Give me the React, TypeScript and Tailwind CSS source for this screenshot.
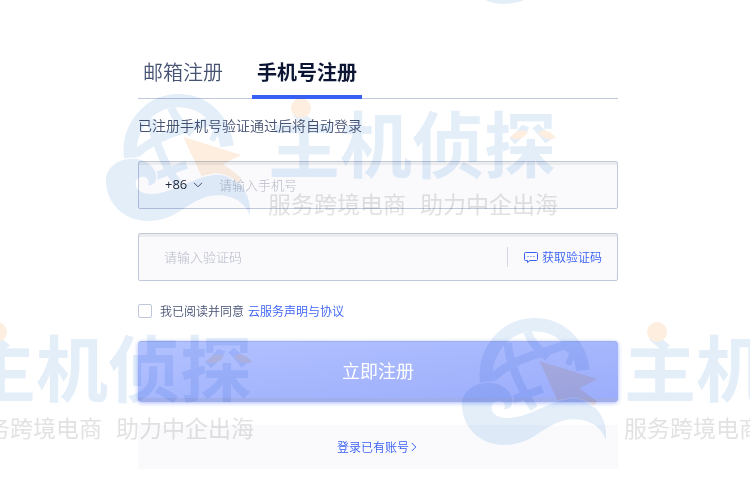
import { useState } from "react"

const tabs = [
  { id: "email", label: "邮箱注册" },
  { id: "phone", label: "手机号注册" },
]

function BrandMark() {
  return (
    <svg viewBox="33 24 435 381" width="145" height="127" className="shrink-0">
      <g fill="none" stroke="#e3eef9">
        <path d="M110 217C98 125 165 44 254 44C330 44 389 100 399 181" strokeWidth="40" />
        <path d="M126 204C165 168 215 145 268 130L344 106" strokeWidth="26" />
        <path d="M174 98C174 145 205 225 252 296" strokeWidth="25" />
        <path d="M232 66C245 98 265 120 294 142" strokeWidth="25" />
        <path d="M185 270L278 236" strokeWidth="24" />
        <path d="M336 100L368 130L354 164" strokeWidth="18" />
      </g>
      <path
        d="M36 292C32 248 68 218 116 218C162 218 190 250 187 278C184 292 174 300 162 297C170 279 154 268 138 274C120 282 121 303 137 315C157 329 188 325 222 315C270 299 315 271 360 266C425 259 477 322 467 388C453 348 416 327 366 328C324 329 290 355 255 377C224 397 190 405 155 405C88 402 40 352 36 292Z"
        fill="#e3eef9"
        stroke="#fff"
        strokeWidth="7"
        paintOrder="stroke"
      />
      <path
        d="M268 153L442 207L388 235L442 275L430 288Q400 262 365 262L322 270Z"
        fill="#fdeee0"
        stroke="#fff"
        strokeWidth="6"
        paintOrder="stroke"
      />
    </svg>
  )
}

function Watermark({ className }: { className: string }) {
  return (
    <div aria-hidden="true" className={`pointer-events-none absolute flex gap-[18px] mix-blend-multiply ${className}`}>
      <BrandMark />
      <div className="relative shrink-0 whitespace-nowrap">
        <div className="text-[72px] leading-[94px] font-bold text-[#e3eef9]">主机侦探</div>
        <svg viewBox="0 0 289 96" width="289" height="96" className="absolute top-0 left-0">
          <circle cx="33" cy="14" r="10" fill="#fdeee0" />
          <path d="M242 44Q250 33 260 38Q254 48 242 44ZM288 44Q280 33 270 38Q276 48 288 44Z" fill="#fdeee0" />
        </svg>
        <div className="flex gap-[14px] text-[23px] leading-[30px] text-[#e2e2e2]">
          <span>服务跨境电商</span>
          <span>助力中企出海</span>
        </div>
      </div>
    </div>
  )
}

function Chevron({ className }: { className: string }) {
  return (
    <svg viewBox="0 0 10 6" width="10" height="6" fill="none" stroke="currentColor" className={className}>
      <path d="M1 .8L5 4.8L9 .8" />
    </svg>
  )
}

export default function App() {
  const [active, setActive] = useState("phone")

  return (
    <main className="relative min-h-screen overflow-hidden bg-white pt-[58px] pb-2 pl-1.5 font-['Noto_Sans_CJK_SC',sans-serif] text-[#465272]">
      <form className="mx-auto w-full max-w-[480px]" onSubmit={(e) => e.preventDefault()}>
        <div role="tablist" className="flex gap-6 border-b border-[#c0c8dc]">
          {tabs.map((tab) => (
            <button
              key={tab.id}
              type="button"
              role="tab"
              aria-selected={active === tab.id}
              onClick={() => setActive(tab.id)}
              className={
                active === tab.id
                  ? "-mb-px border-b-4 border-[#3860f4] px-[5px] pb-[9px] text-xl leading-7 font-bold text-[#0c1634]"
                  : "-mb-px border-b-4 border-transparent px-[5px] pb-[9px] text-xl leading-7 font-[350]"
              }
            >
              {tab.label}
            </button>
          ))}
        </div>

        <p className="mt-4 text-sm leading-5 font-[350]">已注册手机号验证通过后将自动登录</p>

        <div className="mt-[26px] flex h-12 items-center rounded-xs border border-[#c0c8dc] bg-[#fafafd] pl-[26px] shadow-[inset_0_3px_0_#ececee]">
          <div className="relative flex items-center">
            <select
              aria-label="国家/地区代码"
              className="w-10 appearance-none bg-transparent font-['Open_Sans',sans-serif] text-[13px] text-[#1c2438] outline-none"
            >
              <option>+86</option>
            </select>
            <Chevron className="pointer-events-none absolute right-0.5" />
          </div>
          <input
            type="tel"
            aria-label="手机号"
            placeholder="请输入手机号"
            className="ml-3.5 min-w-0 flex-1 bg-transparent text-[13px] font-light outline-none placeholder:text-[#b6b9c6]"
          />
        </div>

        <div className="mt-6 flex h-12 items-center rounded-xs border border-[#c0c8dc] bg-[#fafafd] pr-[15px] pl-[25px] shadow-[inset_0_3px_0_#ececee]">
          <input
            type="text"
            aria-label="验证码"
            placeholder="请输入验证码"
            className="min-w-0 flex-1 bg-transparent text-[13px] font-light outline-none placeholder:text-[#b6b9c6]"
          />
          <button
            type="button"
            className="flex h-5 items-center gap-1 border-l border-[#d3d7e3] pl-4 text-xs font-[350] text-[#3860f4]"
          >
            <svg viewBox="0 0 14 12" width="14" height="12" fill="none" stroke="currentColor">
              <path d="M1.500 1.500h11q1 0 1 1v6q0 1-1 1H6l-2.500 2v-2h-2q-1 0-1-1v-6q0-1 1-1Z" />
              <path d="M3.500 5.500h1M6.500 5.500h1M9.500 5.500h1" />
            </svg>
            获取验证码
          </button>
        </div>

        <div className="mt-5 flex h-5 items-center text-xs font-[350]">
          <input
            id="agree"
            type="checkbox"
            className="mr-2 size-3.5 appearance-none rounded-xs border border-[#c0c8dc] bg-white checked:bg-[#3860f4]"
          />
          <label htmlFor="agree">我已阅读并同意</label>
          <a href="#terms" className="ml-1 text-[#3860f4]">
            云服务声明与协议
          </a>
        </div>

        <button
          type="submit"
          className="mt-5 block h-[61px] w-full rounded-sm bg-linear-to-br from-[#b3c2ff] to-[#9bacfb] pb-1 text-lg text-white shadow-[inset_0_-4px_0_#a0aeeb,inset_0_1px_0_#a0aeeb,0_1px_4px_#a9b8fb]"
        >
          立即注册
        </button>

        <a
          href="#login"
          className="mt-[23px] flex h-11 items-center justify-center bg-[#fafafd] text-xs font-[350] text-[#3860f4]"
        >
          登录已有账号
          <Chevron className="-rotate-90" />
        </a>
      </form>

      <Watermark className="top-[94px] left-[105px]" />
      <Watermark className="top-[318px] left-[461px]" />
      <Watermark className="top-[318px] left-[-199px]" />
      <Watermark className="top-[-123px] left-[461px]" />
    </main>
  )
}
